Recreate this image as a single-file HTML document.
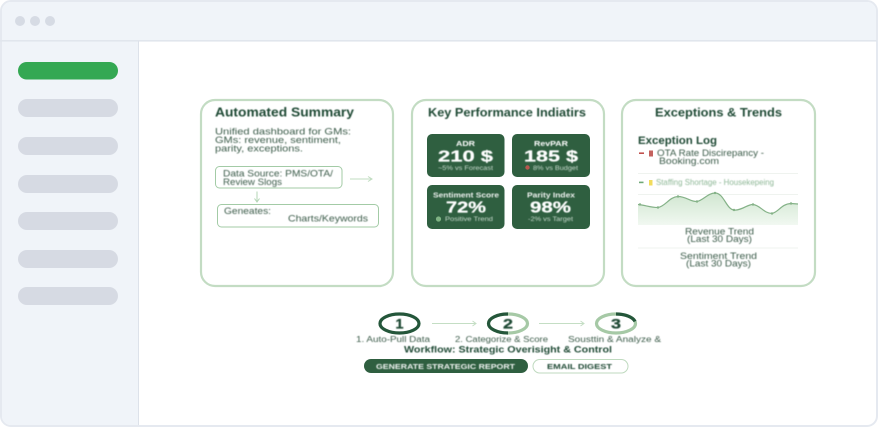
<!DOCTYPE html>
<html lang="en">
<head>
<meta charset="utf-8">
<title>Strategic Dashboard</title>
<style>
html,body{margin:0;padding:0;background:#fff;width:879px;height:428px;overflow:hidden}
svg{display:block}
text{font-family:"Liberation Sans",Arial,sans-serif}
.t{filter:blur(.42px)}
.h{font-weight:700;fill:#1f4a35}
.b{fill:#3c5c4a}
.w{fill:#fff;font-weight:700}
.s{fill:#c9dbce}
</style>
</head>
<body>
<svg width="879" height="428" viewBox="0 0 879 428" xmlns="http://www.w3.org/2000/svg">
<defs>
<linearGradient id="g" x1="0" y1="0" x2="0" y2="1">
<stop offset="0" stop-color="#d0e6d0"/>
<stop offset="1" stop-color="#f1f8f1"/>
</linearGradient>
</defs>
<!-- window -->
<rect x="1" y="1" width="876" height="425" rx="10" fill="#fff" stroke="#e5e9f0" stroke-width="2"/>
<path d="M2 40V11a9 9 0 0 1 9-9H867a9 9 0 0 1 9 9V40Z" fill="#f0f4f9"/>
<path d="M2 41H138V425H11a9 9 0 0 1-9-9Z" fill="#f0f4f9"/>
<rect x="0" y="40" width="877" height="1.6" fill="#e1e6ed"/>
<rect x="138" y="41" width="1" height="384" fill="#dde2ea"/>
<circle cx="20" cy="21" r="5" fill="#d6dbe4"/>
<circle cx="35" cy="21" r="5" fill="#d6dbe4"/>
<circle cx="50" cy="21" r="5" fill="#d6dbe4"/>
<!-- sidebar -->
<rect x="18" y="62" width="100" height="17.5" rx="8.7" fill="#34a853"/>
<rect x="18" y="99" width="100" height="18" rx="9" fill="#d6dae3"/>
<rect x="18" y="137" width="100" height="18" rx="9" fill="#d6dae3"/>
<rect x="18" y="175" width="100" height="18" rx="9" fill="#d6dae3"/>
<rect x="18" y="212" width="100" height="18" rx="9" fill="#d6dae3"/>
<rect x="18" y="250" width="100" height="18" rx="9" fill="#d6dae3"/>
<rect x="18" y="287" width="100" height="18" rx="9" fill="#d6dae3"/>
<!-- cards -->
<g fill="#fff" stroke="#c3dcc3" stroke-width="2.2">
<rect x="201" y="100" width="192" height="186" rx="14"/>
<rect x="412" y="100" width="192" height="186" rx="14"/>
<rect x="622" y="100" width="193" height="186" rx="14"/>
</g>
<g class="t">
<!-- card 1 -->
<text class="h" x="215" y="116.5" font-size="12.5" textLength="139" lengthAdjust="spacingAndGlyphs">Automated Summary</text>
<text class="b" x="215" y="134.5" font-size="9.5" textLength="136" lengthAdjust="spacingAndGlyphs">Unified dashboard for GMs:</text>
<text class="b" x="215" y="143" font-size="9.5" textLength="126" lengthAdjust="spacingAndGlyphs">GMs: revenue, sentiment,</text>
<text class="b" x="215" y="151.5" font-size="9.5" textLength="88" lengthAdjust="spacingAndGlyphs">parity, exceptions.</text>
<text class="b" x="223" y="176.5" font-size="9" textLength="110" lengthAdjust="spacingAndGlyphs">Data Source: PMS/OTA/</text>
<text class="b" x="223" y="185" font-size="9" textLength="59" lengthAdjust="spacingAndGlyphs">Review Slogs</text>
<text class="b" x="224" y="214" font-size="9" textLength="47" lengthAdjust="spacingAndGlyphs">Geneates:</text>
<text class="b" x="288" y="221.5" font-size="9" textLength="80" lengthAdjust="spacingAndGlyphs">Charts/Keywords</text>
</g>
<rect x="215.5" y="166.5" width="126.5" height="21.5" rx="4" fill="none" stroke="#a3cba6" stroke-width="1"/>
<path d="M350 179H372M368 176.5L372 179L368 181.5" fill="none" stroke="#c0dcc0" stroke-width="1"/>
<path d="M257 191.5V202M254.5 198.5L257 202L259.5 198.5" fill="none" stroke="#b3d5b5" stroke-width="1"/>
<rect x="217.5" y="204.5" width="161" height="22.5" rx="4" fill="none" stroke="#a3cba6" stroke-width="1"/>
<!-- card 2 -->
<g fill="#2f5f40">
<rect x="427" y="134" width="77.5" height="43" rx="5"/>
<rect x="512" y="134" width="78" height="43" rx="5"/>
<rect x="427" y="185" width="77.5" height="44" rx="5"/>
<rect x="512" y="185" width="78" height="44" rx="5"/>
</g>
<circle cx="527.5" cy="167.5" r="2.2" fill="#b8574f"/>
<circle cx="438.5" cy="219" r="2.6" fill="#7fb383"/>
<g class="t">
<text class="h" x="428" y="116.5" font-size="12" textLength="158" lengthAdjust="spacingAndGlyphs">Key Performance Indiatirs</text>
<text class="w" x="456" y="146" font-size="7.5" textLength="19" lengthAdjust="spacingAndGlyphs">ADR</text>
<text class="w" x="438" y="161.5" font-size="16" textLength="55" lengthAdjust="spacingAndGlyphs" stroke="#fff" stroke-width=".25">210 $</text>
<text class="s" x="438" y="170" font-size="6.5" textLength="55" lengthAdjust="spacingAndGlyphs">~5% vs Forecast</text>
<text class="w" x="534" y="146" font-size="7.5" textLength="34" lengthAdjust="spacingAndGlyphs">RevPAR</text>
<text class="w" x="524" y="161.5" font-size="16" textLength="54" lengthAdjust="spacingAndGlyphs" stroke="#fff" stroke-width=".25">185 $</text>
<text class="s" x="533" y="170" font-size="6.5" textLength="45" lengthAdjust="spacingAndGlyphs">8% vs Budget</text>
<text class="w" x="433" y="197.5" font-size="7.5" textLength="66" lengthAdjust="spacingAndGlyphs" fill-opacity=".92">Sentiment Score</text>
<text class="w" x="446" y="212.5" font-size="16" textLength="40" lengthAdjust="spacingAndGlyphs" stroke="#fff" stroke-width=".25">72%</text>
<text class="s" x="445" y="221" font-size="6.5" textLength="48" lengthAdjust="spacingAndGlyphs">Positive Trend</text>
<text class="w" x="527" y="197.5" font-size="7.5" textLength="48" lengthAdjust="spacingAndGlyphs" fill-opacity=".92">Parity Index</text>
<text class="w" x="530" y="212.5" font-size="16" textLength="41" lengthAdjust="spacingAndGlyphs" stroke="#fff" stroke-width=".25">98%</text>
<text class="s" x="528" y="221" font-size="6.5" textLength="45" lengthAdjust="spacingAndGlyphs">-2% vs Target</text>
</g>
<!-- card 3 -->
<rect x="639" y="152.4" width="5" height="1.6" fill="#c0504d"/>
<rect x="649" y="150.5" width="4" height="6" fill="#c4625e"/>
<rect x="638" y="173" width="160" height="1" fill="#eff3ef"/>
<rect x="639" y="181.6" width="4.5" height="1.6" fill="#6fa976"/>
<rect x="649" y="180" width="3.5" height="5.5" fill="#f2dc5d"/>
<rect x="638" y="194" width="160" height="1" fill="#eff3ef"/>
<path d="M638 204.5C645 205 650 207.5 658 207.5C666 206 669 197 678 196.5C686 196.5 691 202 697 201.5C703 200.5 708 193 715 193C724 193 726 209 734 210C741 211 748 204 753 204.5C760 205 764 213.5 772 213.5C779 212 781 204 791 203.5L798 204V225H638Z" fill="url(#g)"/>
<path d="M638 204.5C645 205 650 207.5 658 207.5C666 206 669 197 678 196.5C686 196.5 691 202 697 201.5C703 200.5 708 193 715 193C724 193 726 209 734 210C741 211 748 204 753 204.5C760 205 764 213.5 772 213.5C779 212 781 204 791 203.5L798 204" fill="none" stroke="#85b288" stroke-width="1.2"/>
<g fill="#85b288">
<circle cx="640" cy="204.5" r="1.2"/><circle cx="658" cy="207.5" r="1.2"/><circle cx="678" cy="196.5" r="1.2"/>
<circle cx="697" cy="201.5" r="1.2"/><circle cx="715" cy="193" r="1.2"/><circle cx="734" cy="210" r="1.2"/>
<circle cx="753" cy="204.5" r="1.2"/><circle cx="772" cy="213.5" r="1.2"/><circle cx="791" cy="203.5" r="1.2"/>
</g>
<rect x="638" y="247.5" width="160" height="1" fill="#eff3ef"/>
<g class="t">
<text class="h" x="655" y="116.5" font-size="12" textLength="127" lengthAdjust="spacingAndGlyphs">Exceptions &amp; Trends</text>
<text class="h" x="638" y="144" font-size="11" textLength="79" lengthAdjust="spacingAndGlyphs">Exception Log</text>
<text class="b" x="657" y="156" font-size="9" textLength="107" lengthAdjust="spacingAndGlyphs">OTA Rate Discirepancy -</text>
<text class="b" x="659" y="164" font-size="9" textLength="60" lengthAdjust="spacingAndGlyphs">Booking.com</text>
<text x="656" y="185" font-size="8" fill="#8fb897" textLength="118" lengthAdjust="spacingAndGlyphs">Staffing Shortage - Housekepeing</text>
<text class="b" x="685" y="234.5" font-size="9" textLength="69" lengthAdjust="spacingAndGlyphs">Revenue Trend</text>
<text class="b" x="687" y="242" font-size="9" textLength="65" lengthAdjust="spacingAndGlyphs">(Last 30 Days)</text>
<text class="b" x="680" y="259" font-size="9" textLength="77" lengthAdjust="spacingAndGlyphs">Sentiment Trend</text>
<text class="b" x="686" y="266.5" font-size="9" textLength="65" lengthAdjust="spacingAndGlyphs">(Last 30 Days)</text>
</g>
<!-- workflow -->
<ellipse cx="399.5" cy="323.5" rx="19.5" ry="9.5" fill="#fff" stroke="#24563a" stroke-width="3.2"/>
<ellipse cx="508" cy="323.5" rx="19.5" ry="9.5" fill="#fff" stroke="#a6c9a6" stroke-width="3.2"/>
<path d="M508 314A19.5 9.5 0 0 0 508 333" fill="none" stroke="#24563a" stroke-width="3.2"/>
<ellipse cx="616" cy="323.5" rx="19.5" ry="9.5" fill="#fff" stroke="#a6c9a6" stroke-width="3.2"/>
<path d="M616 314A19.5 9.5 0 0 1 635 321.5" fill="none" stroke="#24563a" stroke-width="3.2"/>
<path d="M432 323.5H476M472.5 321L476 323.5L472.5 326" fill="none" stroke="#c4dec4" stroke-width="1"/>
<path d="M539 323.5H584M580.5 321L584 323.5L580.5 326" fill="none" stroke="#c4dec4" stroke-width="1"/>
<rect x="364" y="359" width="164" height="14" rx="7" fill="#2f5f40"/>
<rect x="533" y="359.5" width="95" height="13.5" rx="6.7" fill="#fff" stroke="#bfdabf" stroke-width="1"/>
<g class="t">
<text class="h" x="395.5" y="328.5" font-size="14" textLength="8" lengthAdjust="spacingAndGlyphs" stroke="#1f4a35" stroke-width=".3">1</text>
<text class="h" x="503" y="328.5" font-size="14" textLength="10" lengthAdjust="spacingAndGlyphs" stroke="#1f4a35" stroke-width=".3">2</text>
<text class="h" x="611" y="328.5" font-size="14" textLength="10" lengthAdjust="spacingAndGlyphs" stroke="#1f4a35" stroke-width=".3">3</text>
<text class="b" x="356" y="342" font-size="8" textLength="74" lengthAdjust="spacingAndGlyphs">1. Auto-Pull Data</text>
<text class="b" x="455" y="342" font-size="8" textLength="93" lengthAdjust="spacingAndGlyphs">2. Categorize &amp; Score</text>
<text class="b" x="568" y="342" font-size="8" textLength="93" lengthAdjust="spacingAndGlyphs">Sousttin &amp; Analyze &amp;</text>
<text class="h" x="404" y="352.5" font-size="9.5" textLength="208" lengthAdjust="spacingAndGlyphs">Workflow: Strategic Overisight &amp; Control</text>
<text class="w" x="376" y="368.8" font-size="7.5" textLength="139" lengthAdjust="spacingAndGlyphs" fill-opacity=".92">GENERATE STRATEGIC REPORT</text>
<text class="h" x="547" y="368.8" font-size="7.5" textLength="65" lengthAdjust="spacingAndGlyphs">EMAIL DIGEST</text>
</g>
</svg>
</body>
</html>
